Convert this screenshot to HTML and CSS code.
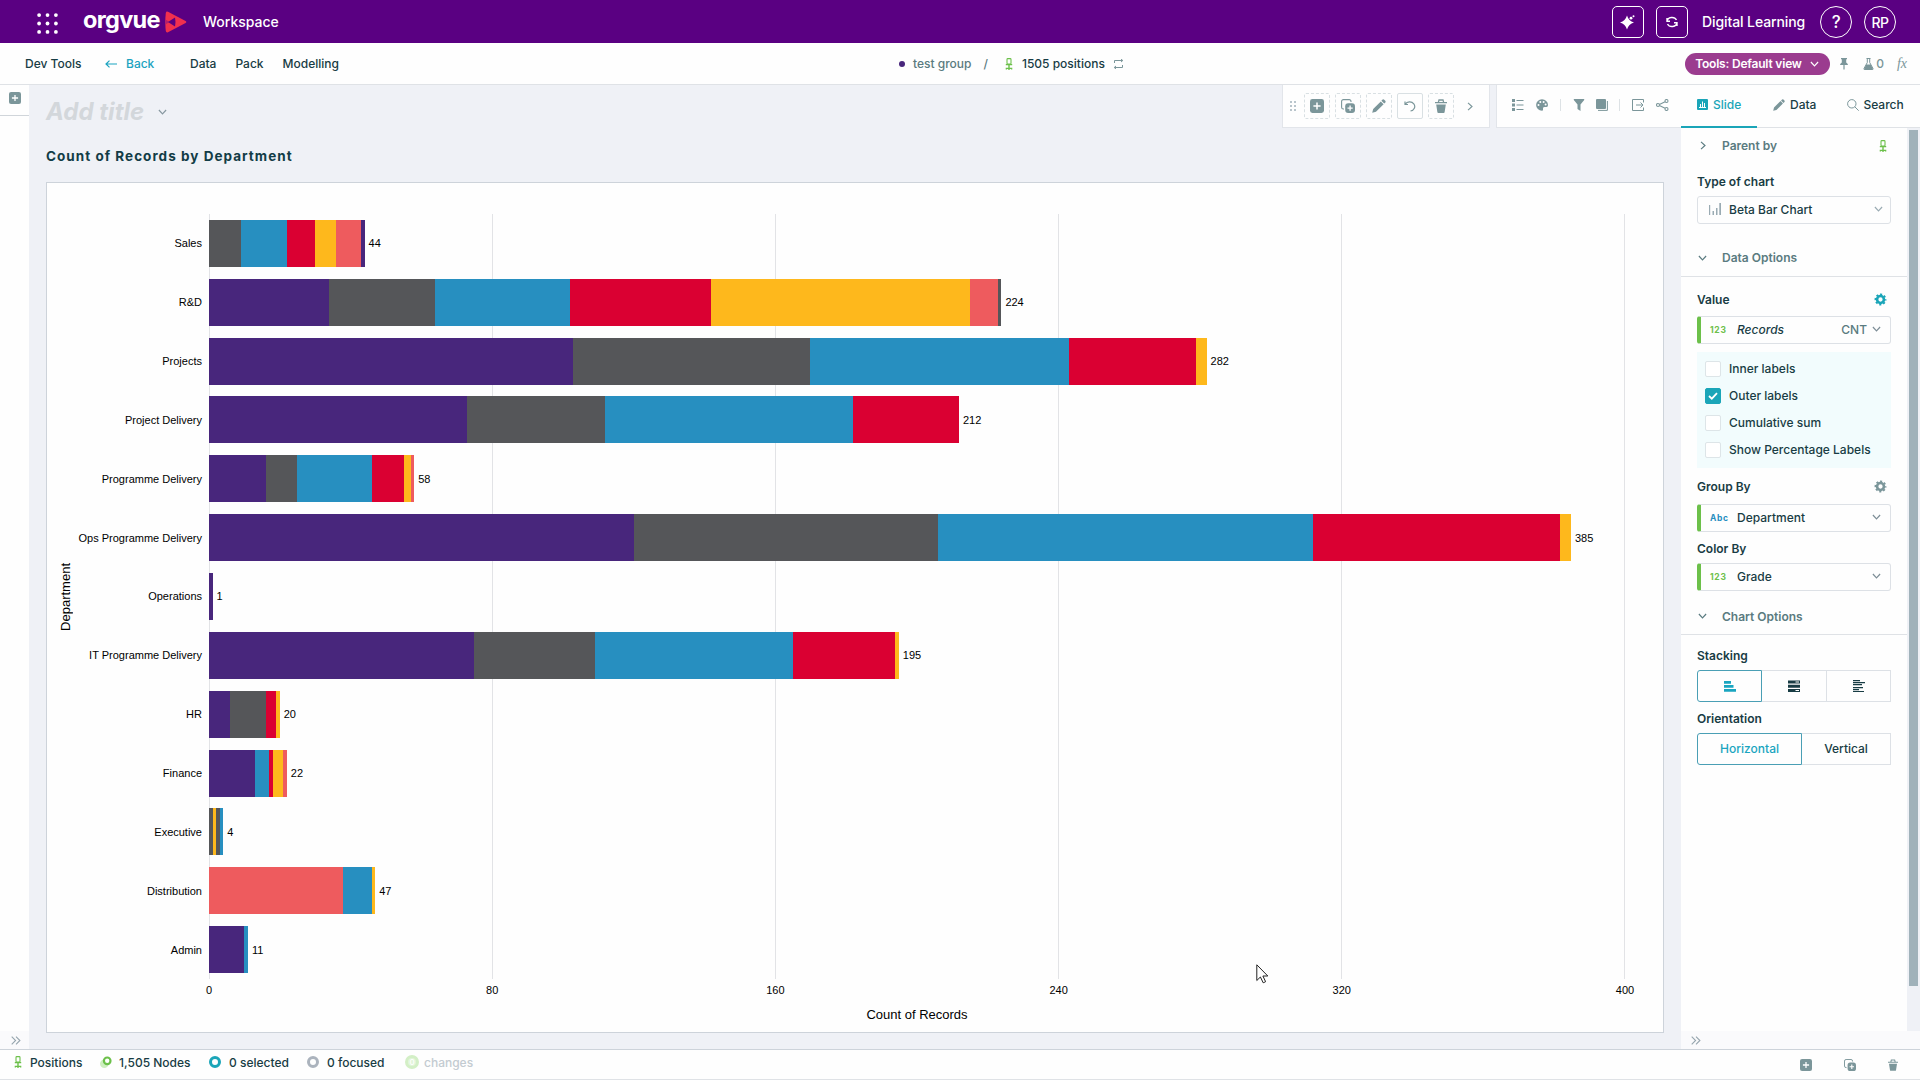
FILE: index.html
```html
<!DOCTYPE html>
<html lang="en">

<head>
    <meta charset="UTF-8">
    <meta name="viewport" content="width=device-width, initial-scale=1.0">
    <title>Orgvue Workspace</title>
    <link rel="stylesheet" href="styles.css">
</head>

<body>
    <!-- Shared icons -->
    <svg class="sprite" xmlns="http://www.w3.org/2000/svg">
        <symbol id="chair" viewBox="0 0 8 12">
            <rect x="2" y="0.6" width="4" height="5.4" rx="0.8" fill="none" stroke="currentColor" stroke-width="1.1"/>
            <path d="M0.8 6.600H7.200M4 7V12M1.4 11.6V10.4H6.6V11.6" fill="none" stroke="currentColor" stroke-width="1.4"/>
        </symbol>
        <symbol id="plus-box" viewBox="0 0 14 14">
            <rect width="14" height="14" rx="2.4" fill="currentColor"/>
            <path d="M7 3.4V10.6M3.4 7H10.6" stroke="#fff" stroke-width="1.5"/>
        </symbol>
        <symbol id="copy-plus" viewBox="0 0 14 14">
            <path d="M3 10H2.4A1.8 1.8 0 0 1 .6 8.2V2.4A1.8 1.8 0 0 1 2.4 .6H8.2A1.8 1.8 0 0 1 10 2.4V3" fill="none" stroke="currentColor" stroke-width="1.1"/>
            <rect x="4.2" y="4.2" width="9.8" height="9.8" rx="3" fill="currentColor"/>
            <path d="M9.1 6.5V11.7M6.5 9.1H11.7" stroke="#fff" stroke-width="1.3"/>
        </symbol>
        <symbol id="pencil" viewBox="0 0 14 14">
            <path d="M0.2 13.8L1.2 10L8.8 2.4L11.6 5.2L4 12.8ZM9.4 1.8L10.6 .6Q11.4 0 12.2 .7L13.3 1.8Q14 2.6 13.4 3.4L12.2 4.6Z" fill="currentColor"/>
        </symbol>
        <symbol id="trash" viewBox="0 0 12 14">
            <path d="M1.2 5.4H10.8L9.6 13.2Q9.5 14 8.7 14H3.3Q2.5 14 2.4 13.2Z" fill="currentColor"/>
            <path d="M0 3.7H12M3.4 3.2L4 1H8L8.6 3.2" fill="none" stroke="currentColor" stroke-width="1.3"/>
        </symbol>
        <symbol id="chevron-down" viewBox="0 0 10 6">
            <path d="M1 .8L5 5L9 .8" fill="none" stroke="currentColor" stroke-width="1.3"/>
        </symbol>
        <symbol id="chevron-right" viewBox="0 0 6 10">
            <path d="M.8 1L5.2 5L.8 9" fill="none" stroke="currentColor" stroke-width="1.3"/>
        </symbol>
        <symbol id="double-right" viewBox="0 0 10 9">
            <path d="M.7 .6L4.6 4.5L.7 8.4M5 .6L8.9 4.5L5 8.4" fill="none" stroke="currentColor" stroke-width="1.1"/>
        </symbol>
        <symbol id="gear" viewBox="-7 -7 14 14">
            <circle r="3.7" fill="none" stroke="currentColor" stroke-width="2.8"/>
            <circle r="5.5" fill="none" stroke="currentColor" stroke-width="1.8" stroke-dasharray="2.3 2.02" stroke-dashoffset="1.15"/>
        </symbol>
    </svg>

    <header class="topbar">
        <svg class="apps" viewBox="0 0 20 20" fill="#fff">
            <circle cx="2" cy="2" r="1.8"/><circle cx="10" cy="2" r="1.8"/><circle cx="18" cy="2" r="1.8"/>
            <circle cx="2" cy="10" r="1.8"/><circle cx="10" cy="10" r="1.8"/><circle cx="18" cy="10" r="1.8"/>
            <circle cx="2" cy="18" r="1.8"/><circle cx="10" cy="18" r="1.8"/><circle cx="18" cy="18" r="1.8"/>
        </svg>
        <span class="logo-text">orgvue</span>
        <svg class="logo-mark" viewBox="0 0 22 22">
            <path d="M.8 2Q1.200 0 3 .8L20.600 10Q22 11 20.600 12L3 21.200Q1.200 22 .8 20Q-.2 11 .8 2Z" fill="#f0304e"/>
            <path d="M.4 8.500L4.500 11L.4 13.500Z" fill="#b0206e"/>
            <path d="M3 11L10 6.600Q11 11 10 15.400Z" fill="#5a0082"/>
        </svg>
        <span class="workspace">Workspace</span>
        <div class="topbar-right">
            <span class="top-btn">
                <svg width="16" height="16" viewBox="0 0 16 16" fill="#fff">
                    <path d="M7 1.5Q8.600 7 14 8.500Q8.600 10 7 15.500Q5.400 10 0 8.500Q5.400 7 7 1.500Z"/>
                    <circle cx="11" cy="4.2" r="1.4"/><circle cx="13.5" cy="2.2" r="1"/>
                </svg>
            </span>
            <span class="top-btn">
                <svg width="12" height="12" viewBox="0 0 12 12" fill="none" stroke="#fff" stroke-width="1.4">
                    <path d="M1 5.3A5 4.4 0 0 1 10.5 4M11 6.7A5 4.4 0 0 1 1.5 8M1 2V5.2H4M11 10V6.8H8"/>
                </svg>
            </span>
            <span class="tenant">Digital Learning</span>
            <span class="top-btn round help">?</span>
            <span class="top-btn round">RP</span>
        </div>
    </header>

    <nav class="navbar">
        <div class="nav-left">
            <span class="dev">Dev Tools</span>
            <span class="back">
                <svg width="12" height="8" viewBox="0 0 12 8" fill="none" stroke="currentColor" stroke-width="1.2"><path d="M12 4H1M4.5 .6L1 4L4.5 7.4"/></svg>
                Back
            </span>
            <span>Data</span>
            <span>Pack</span>
            <span>Modelling</span>
        </div>
        <div class="nav-center">
            <i class="dot"></i>
            <span class="group">test group</span>
            <span class="slash">/</span>
            <svg class="chair" width="8" height="12"><use href="#chair"/></svg>
            <span class="positions">1505 positions</span>
            <svg class="swap" width="11" height="10" viewBox="0 0 11 10" fill="none" stroke="currentColor" stroke-width="1">
                <path d="M1.5 4V1.5H9.5M8 0L9.8 1.5L8 3M9.5 6V8.5H1.5M3 7L1.2 8.5L3 10"/>
            </svg>
        </div>
        <div class="nav-right">
            <span class="pill">Tools: Default view <svg width="9" height="6"><use href="#chevron-down"/></svg></span>
            <svg class="pin" width="8" height="12" viewBox="0 0 8 12" fill="currentColor"><path d="M1 0H7V1.3H6.2V4.5Q8 5.5 8 7H4.6V11L4 12L3.4 11V7H0Q0 5.5 1.8 4.5V1.3H1Z"/></svg>
            <svg class="flask" width="11" height="12" viewBox="0 0 11 12"><path d="M3.5 .5H7.5M4.3 .5V4.5L1 10.5Q.6 11.5 1.7 11.5H9.3Q10.4 11.5 10 10.5L6.7 4.5V.5" fill="none" stroke="currentColor"/><path d="M3.2 6.5H7.8L10.2 11.5H.8Z" fill="currentColor"/></svg>
            <span class="count">0</span>
            <span class="fx">fx</span>
        </div>
    </nav>

    <div class="workspace-body">
        <aside class="rail">
            <div class="rail-top"><svg width="12" height="12"><use href="#plus-box"/></svg></div>
            <div class="rail-bottom"><svg width="10" height="9"><use href="#double-right"/></svg></div>
        </aside>

        <main class="slide">
            <div class="slide-head">
                <span class="slide-title">Add title</span>
                <svg class="title-chevron" width="9" height="6"><use href="#chevron-down"/></svg>
                <div class="toolbar edit-tools">
                    <svg class="handle" width="6" height="10" viewBox="0 0 6 10" fill="#b9c5cc"><path d="M0 0h2v2H0zM4 0h2v2H4zM0 4h2v2H0zM4 4h2v2H4zM0 8h2v2H0zM4 8h2v2H4z"/></svg>
                    <span class="tool"><svg width="14" height="14"><use href="#plus-box"/></svg></span>
                    <span class="tool"><svg width="14" height="14"><use href="#copy-plus"/></svg></span>
                    <span class="tool"><svg width="14" height="14"><use href="#pencil"/></svg></span>
                    <span class="tool solid"><svg width="12" height="12" viewBox="0 0 12 12" fill="none" stroke="currentColor" stroke-width="1.2"><path d="M1 1.5V4.5H4M1.3 4.3A5 4.6 0 1 1 6.5 11"/></svg></span>
                    <span class="tool"><svg width="12" height="14"><use href="#trash"/></svg></span>
                    <svg class="more" width="6" height="9"><use href="#chevron-right"/></svg>
                </div>
                <div class="toolbar view-tools">
                    <svg width="12" height="12" viewBox="0 0 12 12" fill="currentColor"><path d="M0 0h3v3H0zM0 4.5h3v3H0zM0 9h3v3H0zM4.5 1h7v1h-7zM4.5 5.5h7v1h-7zM4.5 10h7v1h-7z"/></svg>
                    <svg width="12" height="12" viewBox="0 0 12 12"><path d="M6 .3A5.9 5.7 0 1 0 6 11.7Q7.6 11.7 7 10Q6.5 8 8.5 8H10.5Q12 8 12 6A6 5.7 0 0 0 6 .3Z" fill="currentColor"/><g fill="#fff"><circle cx="2.5" cy="6" r="1"/><circle cx="4.3" cy="3" r="1"/><circle cx="7.6" cy="3" r="1"/><circle cx="9.6" cy="5.5" r="1"/></g></svg>
                    <i class="sep"></i>
                    <svg width="12" height="12" viewBox="0 0 12 12" fill="currentColor"><path d="M.8 0H11.2V1L7.5 5.5V12L4.5 10V5.5L.8 1Z"/></svg>
                    <svg class="layers" width="12" height="12" viewBox="0 0 12 12"><rect width="10" height="10" rx="1" fill="currentColor"/><path d="M11.4 2V11.4H2" fill="none" stroke="currentColor"/></svg>
                    <i class="sep"></i>
                    <svg width="12" height="12" viewBox="0 0 12 12" fill="none" stroke="currentColor"><path d="M11.5 3.5V.5H.5V11.5H11.5V8.5M4 6H11M8.5 3.5L11 6L8.5 8.5"/></svg>
                    <svg width="13" height="12" viewBox="0 0 13 12" fill="none" stroke="currentColor" stroke-width="1.1"><circle cx="2" cy="6" r="1.5"/><circle cx="10.5" cy="2" r="1.5"/><circle cx="10.5" cy="10" r="1.5"/><path d="M3.4 5.4L9.1 2.7M3.4 6.6L9.1 9.3"/></svg>
                </div>
            </div>
            <h1 class="chart-heading">Count of Records by Department</h1>

            <section class="chart">
                <div class="y-title"><span>Department</span></div>
                <div class="labels" id="labels"></div>
                <div class="plot" id="plot"></div>
                <div class="ticks">
                    <span>0</span><span>80</span><span>160</span><span>240</span><span>320</span><span>400</span>
                </div>
                <div class="x-title">Count of Records</div>
            </section>
        </main>

        <aside class="panel">
            <div class="tabs">
                <span class="tab active">
                    <svg width="11" height="11" viewBox="0 0 11 11"><rect width="11" height="11" rx="1" fill="currentColor"/><path d="M3.5 5V8M5.5 2.5V8M7.5 4V8M2 8.5H9" stroke="#fff" fill="none"/></svg>
                    Slide
                </span>
                <span class="tab tab-data"><svg width="12" height="12"><use href="#pencil"/></svg>Data</span>
                <span class="tab tab-search">
                    <svg width="12" height="12" viewBox="0 0 12 12" fill="none" stroke="currentColor"><circle cx="4.8" cy="4.8" r="4.2"/><path d="M7.8 7.8L11.7 11.7"/></svg>
                    Search
                </span>
            </div>
            <div class="panel-body">
                <div class="panel-content">
                    <div class="section parent">
                        <svg width="6" height="9"><use href="#chevron-right"/></svg>
                        <span>Parent by</span>
                        <svg class="chair" width="8" height="12"><use href="#chair"/></svg>
                    </div>
                    <div class="label type-label">Type of chart</div>
                    <div class="field select">
                        <svg width="12" height="12" viewBox="0 0 12 12" fill="currentColor"><path d="M0 2h1.2v10H0zM3.5 8h1.5v4H3.5zM7 5h1.5v7H7zM10.3 0H12v12h-1.7z"/></svg>
                        <span>Beta Bar Chart</span>
                        <svg class="arrow" width="9" height="6"><use href="#chevron-down"/></svg>
                    </div>
                    <div class="section bordered data-options">
                        <svg width="9" height="6"><use href="#chevron-down"/></svg>
                        <span>Data Options</span>
                    </div>
                    <div class="label value-label">Value <svg class="teal" width="13" height="13"><use href="#gear"/></svg></div>
                    <div class="field prop">
                        <b class="num">123</b><em>Records</em>
                        <span class="agg">CNT</span>
                        <svg class="arrow" width="9" height="6"><use href="#chevron-down"/></svg>
                    </div>
                    <div class="checks">
                        <div class="check"><i></i>Inner labels</div>
                        <div class="check on"><i><svg width="10" height="8" viewBox="0 0 10 8"><path d="M1 4L3.8 6.7L9 1.2" fill="none" stroke="#fff" stroke-width="1.8"/></svg></i>Outer labels</div>
                        <div class="check"><i></i>Cumulative sum</div>
                        <div class="check"><i></i>Show Percentage Labels</div>
                    </div>
                    <div class="label group-label">Group By <svg width="13" height="13"><use href="#gear"/></svg></div>
                    <div class="field prop">
                        <b class="abc">Abc</b><span>Department</span>
                        <svg class="arrow" width="9" height="6"><use href="#chevron-down"/></svg>
                    </div>
                    <div class="label color-label">Color By</div>
                    <div class="field prop">
                        <b class="num">123</b><span>Grade</span>
                        <svg class="arrow" width="9" height="6"><use href="#chevron-down"/></svg>
                    </div>
                    <div class="section bordered chart-options">
                        <svg width="9" height="6"><use href="#chevron-down"/></svg>
                        <span>Chart Options</span>
                    </div>
                    <div class="label stacking-label">Stacking</div>
                    <div class="segmented thirds">
                        <span class="selected"><svg width="12" height="12" viewBox="0 0 12 12" fill="currentColor"><path d="M0 1h7v2.7H0zM0 5h9.5v2.7H0zM0 9h12v2.7H0z"/></svg></span>
                        <span><svg width="12" height="12" viewBox="0 0 12 12"><path d="M0 .5h12v3H0zM0 4.7h12v3H0zM0 8.9h12v3H0z" fill="currentColor"/><path d="M7.5 1.5h3.5v1H7.500zM7.5 9.9h3.5v1H7.500z" fill="#fff"/></svg></span>
                        <span><svg width="12" height="12" viewBox="0 0 12 12" fill="currentColor"><path d="M0 0h7v1.300H0zM0 2h12v1.300H0zM0 4h9v1.300H0zM0 7h10v1.300H0zM0 9h6v1.300H0zM0 11h11v1H0z"/></svg></span>
                    </div>
                    <div class="label orient-label">Orientation</div>
                    <div class="segmented halves">
                        <span class="selected">Horizontal</span>
                        <span>Vertical</span>
                    </div>
                </div>
                <div class="scroll"><div class="thumb"></div></div>
            </div>
            <div class="panel-foot"><svg width="10" height="9"><use href="#double-right"/></svg></div>
        </aside>
    </div>

    <footer class="status">
        <svg class="chair" width="8" height="12"><use href="#chair"/></svg>
        <span class="s-positions">Positions</span>
        <svg class="s-node" width="12" height="12" viewBox="0 0 12 12"><circle cx="4.3" cy="7.7" r="4.3" fill="#cdeebf"/><circle cx="7.2" cy="4.8" r="3.3" fill="#fff" stroke="#6cc04a" stroke-width="2.2"/></svg>
        <span class="s-nodes">1,505 Nodes</span>
        <i class="ring teal-ring"></i>
        <span class="s-selected">0 selected</span>
        <i class="ring"></i>
        <span class="s-focused">0 focused</span>
        <i class="badge">0</i>
        <span class="s-changes">changes</span>
        <div class="status-tools">
            <svg width="12" height="12"><use href="#plus-box"/></svg>
            <svg width="12" height="12"><use href="#copy-plus"/></svg>
            <svg width="10" height="12"><use href="#trash"/></svg>
        </div>
    </footer>

    <svg class="cursor" width="13" height="20" viewBox="0 0 13 20"><path d="M.8 .8V16.5L4.4 13L7.2 18.8L9.6 17.7L6.9 12H11.8Z" fill="#fff" stroke="#222" stroke-width="1"/></svg>

    <script src="chart.js"></script>
</body>

</html>
```

FILE: styles.css
```css
* {
    margin: 0;
    padding: 0;
    box-sizing: border-box;
}

body {
    width: 1920px;
    height: 1080px;
    overflow: hidden;
    display: flex;
    flex-direction: column;
    font-family: Inter, sans-serif;
    font-size: 12px;
    font-weight: 500;
    color: #183c44;
    background-color: #fefefe;
}

svg {
    display: block;
    flex: none;
}

.sprite {
    display: none;
}

span {
    white-space: nowrap;
}

/* Top bar */
.topbar {
    height: 43px;
    flex: none;
    display: flex;
    align-items: center;
    padding: 0 24px 0 37px;
    background-color: #5a0082;
    color: #fff;
}

.apps {
    width: 21px;
    height: 21px;
    margin-top: 3px;
}

.logo-text {
    width: 78px;
    margin: -4px 4px 0 25px;
    font-size: 23.5px;
    font-weight: 700;
    letter-spacing: -0.7px;
}

.logo-mark {
    width: 22px;
    height: 22px;
    margin-top: 1px;
}

.workspace {
    margin-left: 16px;
    font-size: 14px;
}

.topbar-right {
    display: flex;
    align-items: center;
    gap: 12px;
    margin-left: auto;
    padding-top: 1px;
}

.tenant {
    margin: -1px 2px 0;
    width: 104px;
    font-size: 14px;
    letter-spacing: -0.1px;
}

.top-btn {
    width: 32px;
    height: 32px;
    display: flex;
    align-items: center;
    justify-content: center;
    border: 1px solid #fff;
    border-radius: 5px;
    font-size: 14px;
    letter-spacing: -0.5px;
}

.round {
    border-radius: 50%;
}

.help {
    font-size: 17px;
}

/* Nav bar */
.navbar {
    height: 42px;
    flex: none;
    display: grid;
    grid-template-columns: 899px 1fr auto;
    align-items: center;
    border-bottom: 1px solid #dfe2e6;
}

.nav-left,
.nav-center,
.nav-right {
    display: flex;
    align-items: center;
}

.nav-left {
    padding-left: 25px;
    gap: 19px;
}

.dev {
    width: 61px;
}

.back {
    display: flex;
    align-items: center;
    gap: 9px;
    width: 66px;
    color: #1ba3c0;
}

.dot {
    width: 6px;
    height: 6px;
    border-radius: 50%;
    background-color: #48267c;
}

.group {
    margin-left: 8px;
    color: #5a7b80;
}

.slash {
    margin: 0 17px 0 12px;
    color: #5a7b80;
}

.chair {
    color: #6cc04a;
}

.positions {
    margin-left: 9px;
}

.swap {
    margin-left: 8px;
    color: #7b969a;
}

.nav-right {
    padding-right: 13px;
    color: #7b969a;
}

.pill {
    display: flex;
    align-items: center;
    justify-content: space-between;
    width: 145px;
    height: 22px;
    padding: 0 11px 0 10px;
    border-radius: 11px;
    background-color: #9b3c8f;
    color: #fff;
    font-weight: 600;
    letter-spacing: -0.2px;
}

.pin {
    margin-left: 10px;
}

.flask {
    margin-left: 15px;
}

.count {
    margin-left: 2px;
}

.fx {
    margin-left: 13px;
    font-family: "Liberation Serif", serif;
    font-size: 14px;
    font-style: italic;
}

/* Main area */
.workspace-body {
    flex: 1;
    min-height: 0;
    display: flex;
}

.rail {
    width: 29px;
    display: flex;
    flex-direction: column;
    justify-content: space-between;
    color: #7b969a;
}

.rail-top {
    height: 31px;
    padding: 7px 0 0 9px;
    border-bottom: 1px solid #d0d5da;
}

.rail-bottom,
.panel-foot {
    height: 18px;
    padding: 5px 0 0 11px;
    background-color: #fafafc;
    color: #96a5ae;
}

.panel-foot {
    padding-left: 10px;
}

.slide {
    flex: 1;
    display: flex;
    flex-direction: column;
    padding-left: 17px;
    background-color: #eff1f6;
}

.slide-head {
    height: 43px;
    display: flex;
    align-items: flex-start;
}

.slide-title {
    width: 112px;
    padding-top: 12px;
    font-size: 24px;
    line-height: 30px;
    font-weight: 700;
    font-style: italic;
    color: #d3d7db;
}

.title-chevron {
    margin-top: 24px;
    color: #8797a0;
}

.toolbar {
    height: 43px;
    display: flex;
    align-items: center;
    background-color: #fefefe;
    border: 1px solid #e2e5ea;
    border-top: none;
    color: #7b969a;
}

.edit-tools {
    width: 208px;
    margin: 0 6px 0 auto;
    padding-left: 7px;
    gap: 5px;
}

.handle {
    margin-right: 3px;
}

.tool {
    width: 26px;
    height: 26px;
    display: flex;
    align-items: center;
    justify-content: center;
    border: 1px dashed #d9e0e3;
    border-radius: 2px;
}

.tool.solid {
    border-style: solid;
}

.more {
    margin-left: 8px;
}

.view-tools {
    width: 185px;
    padding-left: 15px;
    padding-bottom: 2px;
    gap: 12px;
    border-right: none;
}

.layers {
    margin-left: -1px;
    margin-right: -1px;
}

.sep {
    width: 1px;
    height: 12px;
    background-color: #dde2e5;
}

.chart-heading {
    height: 54px;
    padding-top: 19px;
    font-size: 13.5px;
    line-height: 18px;
    font-weight: 700;
    letter-spacing: 1.03px;
    color: #123c46;
}

/* Chart */
.chart {
    width: 1618px;
    height: 851px;
    display: grid;
    grid-template-columns: 30px 132px 1fr;
    grid-template-rows: 765px 21px 30px;
    padding: 31px 38px 0 0;
    background-color: #fefefe;
    border: 1px solid #cdd3da;
    font-family: "Liberation Sans", Arial, sans-serif;
    font-size: 11px;
    font-weight: 400;
    color: #000;
}

.y-title {
    display: flex;
    align-items: center;
    justify-content: center;
    padding-left: 6px;
    font-size: 13px;
}

.y-title span {
    writing-mode: vertical-rl;
    transform: rotate(180deg);
}

.labels,
.plot {
    display: grid;
    grid-template-rows: repeat(13, 1fr);
    align-items: center;
}

.labels {
    padding-right: 7px;
    text-align: right;
}

.plot {
    background-image: linear-gradient(to right, #e2e3e6 1px, transparent 1px);
    background-size: 20% 100%;
    border-right: 1px solid #e2e3e6;
}

.bar {
    height: 80%;
    display: flex;
    align-items: center;
}

.seg {
    height: 100%;
    flex: none;
}

.purple { background-color: #48267c; }
.grey { background-color: #555659; }
.blue { background-color: #278fc0; }
.red { background-color: #da0032; }
.yellow { background-color: #feb81c; }
.coral { background-color: #ee5b5e; }

.total {
    margin-left: 4px;
}

.ticks {
    grid-column: 3;
    display: flex;
    justify-content: space-between;
    align-items: center;
}

.ticks span {
    width: 0;
    display: flex;
    justify-content: center;
}

.x-title {
    grid-column: 3;
    padding-top: 7px;
    text-align: center;
    font-size: 13px;
}

/* Right panel */
.panel {
    width: 239px;
    display: flex;
    flex-direction: column;
}

.tabs {
    height: 43px;
    flex: none;
    display: flex;
    border-bottom: 1px solid #dfe2e6;
    font-size: 12px;
}

.tab {
    height: 43px;
    display: flex;
    align-items: center;
    gap: 5px;
    padding-bottom: 4px;
}

.tab svg {
    color: #7b969a;
}

.tab.active {
    width: 76px;
    padding: 0 0 3px 16px;
    border-bottom: 2px solid #1aa5b8;
    color: #1aa5b8;
}

.tab.active svg {
    color: #1aa5b8;
}

.tab-data {
    margin-left: 16px;
}

.tab-search {
    margin-left: 31px;
    gap: 4px;
}

.panel-body {
    flex: 1;
    display: flex;
}

.panel-content {
    flex: 1;
    padding: 0 16px;
}

.scroll {
    width: 13px;
    padding: 2px 2px 0;
    background-color: #eff1f6;
}

.thumb {
    height: 856px;
    background-color: #a0b2ba;
}

.section {
    display: flex;
    align-items: center;
    margin: 0 -16px;
    padding-left: 17px;
    font-weight: 600;
    color: #5a7b80;
}

.section span {
    margin-left: 15px;
}

.section.parent {
    height: 36px;
    padding-left: 19px;
    padding-right: 20px;
    padding-bottom: 1px;
}

.section.parent span {
    margin-left: 16px;
}

.parent .chair {
    margin-left: auto;
}

.bordered {
    border-bottom: 1px solid #dfe2e6;
}

.data-options {
    height: 38px;
    margin-top: 15px;
}

.chart-options {
    height: 37px;
    margin-top: 7px;
}

.label {
    height: 28px;
    display: flex;
    align-items: center;
    justify-content: space-between;
    padding: 0 4px 2px 0;
    font-weight: 600;
}

.label svg {
    color: #7b969a;
}

.label .teal {
    color: #1aa5b8;
}

.type-label {
    margin-top: 4px;
}

.value-label {
    height: 32px;
    margin-top: 7px;
}

.group-label {
    height: 34px;
    margin-top: 2px;
}

.color-label,
.orient-label {
    margin-top: 3px;
}

.stacking-label {
    margin-top: 7px;
}

.field {
    height: 28px;
    display: flex;
    align-items: center;
    padding: 0 9px 2px 11px;
    border: 1px solid #dde1e6;
    border-radius: 3px;
}

.arrow {
    margin-left: auto;
    color: #7d8d96;
}

.select {
    padding-right: 7px;
}

.select svg {
    color: #9aabb3;
}

.select span {
    margin-left: 8px;
}

.prop {
    border-left: 4px solid #6cc04a;
    padding-left: 9px;
}

.prop b {
    width: 27px;
    padding-top: 1px;
    font-size: 8.5px;
    letter-spacing: 0.7px;
}

.num {
    color: #6cc04a;
}

.abc {
    color: #278fc0;
}

.agg {
    margin-left: auto;
    color: #5a7b80;
}

.agg + .arrow {
    margin-left: 5px;
}

.checks {
    height: 116px;
    margin-top: 8px;
    padding: 3px 8px;
    background-color: #f2fcfd;
}

.check {
    height: 27px;
    display: flex;
    align-items: center;
    gap: 8px;
}

.check i {
    width: 16px;
    height: 16px;
    display: flex;
    align-items: center;
    justify-content: center;
    border: 1px solid #dde5e8;
    border-radius: 2px;
    background-color: #fff;
}

.check.on i {
    border-color: #1aa5b8;
    background-color: #1aa5b8;
}

.segmented {
    height: 32px;
    display: grid;
}

.thirds {
    grid-template-columns: 65px 65px 64px;
}

.halves {
    grid-template-columns: 105px 89px;
}

.segmented span {
    display: flex;
    align-items: center;
    justify-content: center;
    border: 1px solid #dde1e6;
    border-left: none;
}

.halves span {
    padding-bottom: 1px;
}

.segmented .selected {
    border: 1px solid #4a9fb5;
    border-radius: 3px 0 0 3px;
    color: #1aa5c0;
}

/* Status bar */
.status {
    height: 31px;
    flex: none;
    display: flex;
    align-items: center;
    padding: 0 22px 5px 14px;
    border-top: 1px solid #cdd3da;
    border-bottom: 1px solid #dfe2e6;
}

.s-positions {
    width: 69px;
    margin-left: 8px;
}

.s-node {
    margin-left: 1px;
}

.s-nodes {
    width: 82px;
    margin-left: 7px;
}

.ring {
    width: 12px;
    height: 12px;
    margin-left: 8px;
    border: 3px solid #abb3bd;
    border-radius: 50%;
}

.teal-ring {
    border-color: #1aa5b8;
}

.s-selected {
    width: 70px;
    margin-left: 8px;
}

.s-focused {
    width: 70px;
    margin-left: 8px;
}

.badge {
    width: 14px;
    height: 14px;
    margin-left: 8px;
    border: 3px solid #d3efc6;
    border-radius: 50%;
    background-color: #e2f5da;
    color: #fff;
    font-size: 8px;
    line-height: 8px;
    font-style: normal;
    text-align: center;
}

.s-changes {
    margin-left: 5px;
    color: #c3cbd1;
}

.status-tools {
    display: flex;
    gap: 32px;
    margin-left: auto;
    padding-top: 6px;
    color: #7b969a;
}

.cursor {
    position: absolute;
    left: 1256px;
    top: 964px;
}
```

FILE: chart.js
```js
const MAX = 400;

const rows = [
    ['Sales', [['grey', 9], ['blue', 13], ['red', 8], ['yellow', 6], ['coral', 7], ['purple', 1]]],
    ['R&D', [['purple', 34], ['grey', 30], ['blue', 38], ['red', 40], ['yellow', 73], ['coral', 8], ['grey', 1]]],
    ['Projects', [['purple', 103], ['grey', 67], ['blue', 73], ['red', 36], ['yellow', 3]]],
    ['Project Delivery', [['purple', 73], ['grey', 39], ['blue', 70], ['red', 30]]],
    ['Programme Delivery', [['purple', 16], ['grey', 9], ['blue', 21], ['red', 9], ['yellow', 2], ['coral', 1]]],
    ['Ops Programme Delivery', [['purple', 120], ['grey', 86], ['blue', 106], ['red', 70], ['yellow', 3]]],
    ['Operations', [['purple', 1]]],
    ['IT Programme Delivery', [['purple', 75], ['grey', 34], ['blue', 56], ['red', 29], ['yellow', 1]]],
    ['HR', [['purple', 6], ['grey', 10], ['red', 3], ['yellow', 1]]],
    ['Finance', [['purple', 13], ['blue', 4], ['red', 1], ['yellow', 3], ['coral', 1]]],
    ['Executive', [['grey', 1], ['yellow', 1], ['grey', 1], ['blue', 1]]],
    ['Distribution', [['coral', 38], ['blue', 8], ['yellow', 1]]],
    ['Admin', [['purple', 10], ['blue', 1]]]
];

const labels = document.getElementById('labels');
const plot = document.getElementById('plot');

rows.forEach(([name, segments]) => {
    const label = document.createElement('span');
    label.textContent = name;
    labels.appendChild(label);

    const bar = document.createElement('div');
    bar.className = 'bar';
    let sum = 0;

    segments.forEach(([color, value]) => {
        const seg = document.createElement('div');
        seg.className = `seg ${color}`;
        seg.style.width = `${value / MAX * 100}%`;
        bar.appendChild(seg);
        sum += value;
    });

    const total = document.createElement('span');
    total.className = 'total';
    total.textContent = sum;
    bar.appendChild(total);
    plot.appendChild(bar);
});
```
